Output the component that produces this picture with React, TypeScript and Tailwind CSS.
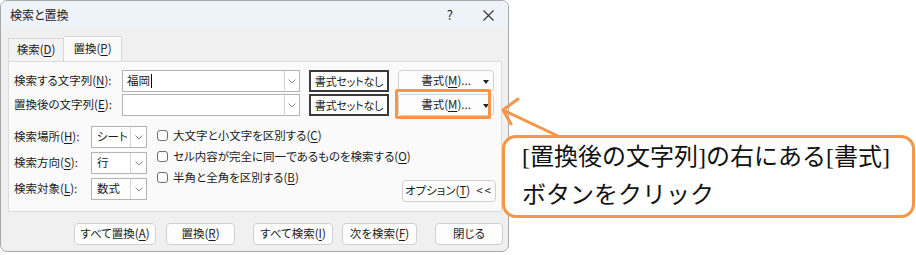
import type { ReactNode } from 'react';

const Chevron = () => (
  <svg width="8" height="5" viewBox="0 0 8 5" className="block">
    <path d="M0.5 0.5 L4 4 L7.5 0.5" fill="none" stroke="#8a8a8a" strokeWidth="1" />
  </svg>
);

const Key = ({ k }: { k: string }) => (
  <>
    (<u className="underline-offset-2">{k}</u>)
  </>
);

const ComboInput = ({ value, caret }: { value?: string; caret?: boolean }) => (
  <div className="flex h-[22px] w-[178px] items-stretch border border-[#b4b4b4] bg-white">
    <div className="flex flex-1 items-center pl-[4px]">
      {value}
      {caret && <span className="ml-[1px] inline-block h-[14px] w-[1px] bg-black" />}
    </div>
    <div className="flex w-[15px] items-center justify-center border-l border-[#d4d4d4]">
      <Chevron />
    </div>
  </div>
);

const Select = ({ value }: { value: string }) => (
  <div className="flex h-[22px] w-[56px] items-stretch border border-[#b4b4b4] bg-white">
    <div className="flex flex-1 items-center pl-[5px]">{value}</div>
    <div className="flex w-[16px] items-center justify-center border-l border-[#d4d4d4]">
      <Chevron />
    </div>
  </div>
);

const NoFormat = () => (
  <div className="ml-[9px] flex h-[22px] w-[80px] items-center justify-center border-2 border-[#3a3a3a] bg-white text-[11px] tracking-[-0.2px]">
    書式セットなし
  </div>
);

const FormatBtn = () => (
  <div className="relative ml-[9px] flex h-[22px] w-[96px] items-center justify-center rounded-[4px] border border-[#d2d2d2] bg-[#fdfdfd]">
    <span>
      書式<Key k="M" />...
    </span>
    <span className="absolute right-[4px] top-[9px] h-0 w-0 border-x-[3px] border-t-[4px] border-x-transparent border-t-[#222]" />
  </div>
);

const Btn = ({ children, className = '' }: { children: ReactNode; className?: string }) => (
  <div
    className={`flex h-[22px] shrink-0 items-center justify-center rounded-[4px] border border-[#d0d0d0] bg-[#fdfdfd] ${className}`}
  >
    {children}
  </div>
);

const Check = ({ children }: { children: ReactNode }) => (
  <div className="flex h-[21px] items-center">
    <span className="h-[11px] w-[11px] shrink-0 rounded-[3px] border border-[#6e6e6e] bg-white" />
    <span className="ml-[5px]">{children}</span>
  </div>
);

export default function App() {
  return (
    <div
      className="relative h-[255px] w-[916px] overflow-hidden whitespace-nowrap bg-white text-[11.5px] text-[#1b1b1b] [font-feature-settings:'palt']"
      style={{ fontFamily: '"Noto Sans CJK JP", "Noto Sans", sans-serif' }}
    >
      {/* dialog */}
      <div className="flex h-[252px] w-[509px] flex-col overflow-hidden rounded-[7px] border border-[#a8a8a8] bg-[#f0f0f0]">
        <div className="flex h-[28px] shrink-0 items-center bg-[#eef2f9] pl-[9px] text-[12px]">
          <span>検索と置換</span>
          <div className="ml-auto flex items-center">
            <span className="text-[13px]">?</span>
            <svg width="11" height="11" viewBox="0 0 11 11" className="ml-[30px] mr-[14px]">
              <path d="M0.5 0.5 L10.5 10.5 M10.5 0.5 L0.5 10.5" stroke="#333" strokeWidth="1.1" />
            </svg>
          </div>
        </div>

        <div className="flex flex-col pl-[7px] pr-[6px]">
          {/* tabs */}
          <div className="mt-[7px] flex h-[25px] items-end">
            <div className="flex h-[23px] w-[56px] items-center justify-center border border-b-0 border-[#d8d8d8] bg-[#f3f3f3]">
              検索<Key k="D" />
            </div>
            <div className="flex h-[25px] w-[58px] items-center justify-center border border-b-0 border-l-0 border-[#d8d8d8] bg-[#fafafa]">
              置換<Key k="P" />
            </div>
          </div>

          {/* panel */}
          <div className="flex h-[151px] flex-col border border-[#dcdcdc] bg-[#fafafa] pl-[5px] pr-[6px] pt-[8px]">
            <div className="flex flex-col gap-[2px]">
              <div className="flex items-center">
                <div className="w-[108px]">
                  検索する文字列<Key k="N" />:
                </div>
                <ComboInput value="福岡" caret />
                <NoFormat />
                <FormatBtn />
              </div>
              <div className="flex items-center">
                <div className="w-[108px]">
                  置換後の文字列<Key k="E" />:
                </div>
                <ComboInput />
                <NoFormat />
                <FormatBtn />
              </div>
            </div>

            <div className="mt-[10px] flex">
              <div className="flex shrink-0 flex-col gap-[4px]">
                {[
                  ['検索場所', 'H', 'シート'],
                  ['検索方向', 'S', '行'],
                  ['検索対象', 'L', '数式'],
                ].map(([label, k, v]) => (
                  <div key={k} className="flex items-center">
                    <div className="w-[77px]">
                      {label}
                      <Key k={k} />:
                    </div>
                    <Select value={v} />
                  </div>
                ))}
              </div>
              <div className="ml-[10px] mt-[-1px] flex min-w-0 flex-1 flex-col">
                <Check>
                  大文字と小文字を区別する<Key k="C" />
                </Check>
                <Check>
                  セル内容が完全に同一であるものを検索する<Key k="O" />
                </Check>
                <Check>
                  半角と全角を区別する<Key k="B" />
                </Check>
              </div>
              <div className="flex shrink-0 flex-col justify-end">
                <Btn className="mb-[-2px] mr-[-1px] w-[94px]">
                  オプション<Key k="T" />
                  <span className="ml-[6px] tracking-[2px]">&lt;&lt;</span>
                </Btn>
              </div>
            </div>
          </div>
        </div>

        {/* footer */}
        <div className="mt-[11px] flex">
          <Btn className="ml-[73px] w-[82px]">
            すべて置換<Key k="A" />
          </Btn>
          <Btn className="ml-[10px] w-[69px]">
            置換<Key k="R" />
          </Btn>
          <Btn className="ml-[18px] w-[80px]">
            すべて検索<Key k="I" />
          </Btn>
          <Btn className="ml-[9px] w-[75px] border-[1.5px] border-[#2f7fd6]">
            次を検索<Key k="F" />
          </Btn>
          <Btn className="ml-[18px] w-[68px]">閉じる</Btn>
        </div>
      </div>

      {/* highlight around the format button */}
      <div className="absolute left-[395px] top-[89px] h-[30px] w-[96px] rounded-[2px] border-[3px] border-[#f79646]" />

      {/* arrow */}
      <svg className="absolute left-0 top-0" width="916" height="255">
        <path
          d="M558 136 L503 110 M503 110 L518 99 M503 110 L511 124"
          fill="none"
          stroke="#f79646"
          strokeWidth="3"
          strokeLinecap="round"
        />
      </svg>

      {/* callout */}
      <div
        className="absolute left-[502px] top-[135px] h-[83px] w-[413px] rounded-[14px] border-[3px] border-[#f79646] bg-white pl-[17px] text-[24px] leading-[38px] text-[#111] [font-feature-settings:normal]"
        style={{ fontFamily: '"Liberation Serif", "Noto Sans CJK JP", serif' }}
      >
        <div>[置換後の文字列]の右にある[書式]</div>
        <div>ボタンをクリック</div>
      </div>
    </div>
  );
}
